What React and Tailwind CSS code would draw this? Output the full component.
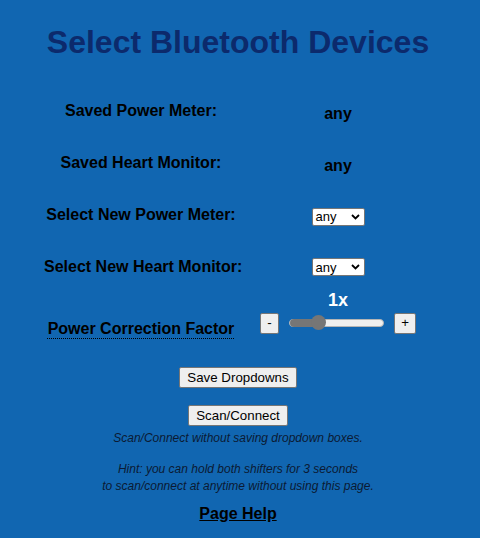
import React from 'react';

function Row({ label, children, valueClass = '' }) {
  return (
    <div className="grid grid-cols-2 h-[52px] items-center">
      <div className="pl-[6px] text-center text-[16px] font-bold text-black whitespace-nowrap">{label}</div>
      <div className={`flex justify-center ${valueClass}`}>{children}</div>
    </div>
  );
}

function FakeSelect() {
  return (
    <div className="flex items-center justify-between w-[53px] h-[18px] bg-white border border-[#767676] rounded-[2px] pl-[3px] pr-[4px] text-[13px] leading-none text-black">
      <span>any</span>
      <svg width="9" height="6" viewBox="0 0 9 6">
        <path d="M1 1 L4.5 4.5 L8 1" stroke="#000" strokeWidth="1.8" fill="none" />
      </svg>
    </div>
  );
}

function Btn({ children, className = '' }) {
  return (
    <button className={`h-[21px] px-[7px] bg-[#efefef] border border-[#767676] rounded-[2px] text-[13.3px] leading-none text-black ${className}`}>
      {children}
    </button>
  );
}

export default function App() {
  return (
    <div className="min-h-[538px] w-full bg-[#1166b1] font-['Liberation_Sans',Arial,sans-serif]">
      <div className="w-[476px]">
        <h1 className="pt-[24px] text-center text-[32px] leading-[37px] font-bold text-[#0c2a6c]">
          Select Bluetooth Devices
        </h1>

        <div className="w-[400px] mx-auto mt-[24px]">
          <Row label="Saved Power Meter:" valueClass="pt-[5px]">
            <span className="text-[16px] font-bold text-black">any</span>
          </Row>
          <Row label="Saved Heart Monitor:" valueClass="pt-[5px]">
            <span className="text-[16px] font-bold text-black">any</span>
          </Row>
          <Row label="Select New Power Meter:" valueClass="pt-[3px]">
            <FakeSelect />
          </Row>
          <Row label="Select New Heart Monitor:" valueClass="pt-0">
            <FakeSelect />
          </Row>

          {/* Power correction row */}
          <div className="grid grid-cols-2 mt-[-4px]">
            <div className="pl-[6px] text-center pt-[28px] whitespace-nowrap">
              <span className="text-[16px] leading-[18px] font-bold text-black underline decoration-dotted decoration-1 underline-offset-[4px]">
                Power Correction Factor
              </span>
            </div>
            <div className="flex flex-col items-center">
              <div className="text-[18px] leading-[22px] font-bold text-white">1x</div>
              <div className="flex items-center gap-[10px] mt-[2px] h-[20px]">
                <Btn className="w-[19px] h-[19px] px-0 flex items-center justify-center">-</Btn>
                <div className="relative w-[95px] h-[8px] rounded-full bg-[#efefef] border border-[#b5b5b5]">
                  <div className="absolute left-0 top-[-1px] h-[8px] w-[30px] rounded-l-full bg-[#767676]" />
                  <div className="absolute left-[21px] top-[-5px] w-[15px] h-[15px] rounded-full bg-[#767676]" />
                </div>
                <Btn className="w-[22px] h-[19px] px-0 flex items-center justify-center">+</Btn>
              </div>
            </div>
          </div>
        </div>

        <div className="flex flex-col items-center mt-[26px]">
          <Btn>Save Dropdowns</Btn>
          <Btn className="mt-[17px]">Scan/Connect</Btn>
          <p className="mt-[4px] text-center italic text-[12px] leading-[17px] text-[#0b1a33]">
            Scan/Connect without saving dropdown boxes.
          </p>
          <p className="mt-[14px] text-center italic text-[12px] leading-[17px] text-[#0b1a33]">
            Hint: you can hold both shifters for 3 seconds
            <br />
            to scan/connect at anytime without using this page.
          </p>
          <a href="#" className="mt-[7px] text-[16px] font-bold text-black underline">
            Page Help
          </a>
        </div>
      </div>
    </div>
  );
}
